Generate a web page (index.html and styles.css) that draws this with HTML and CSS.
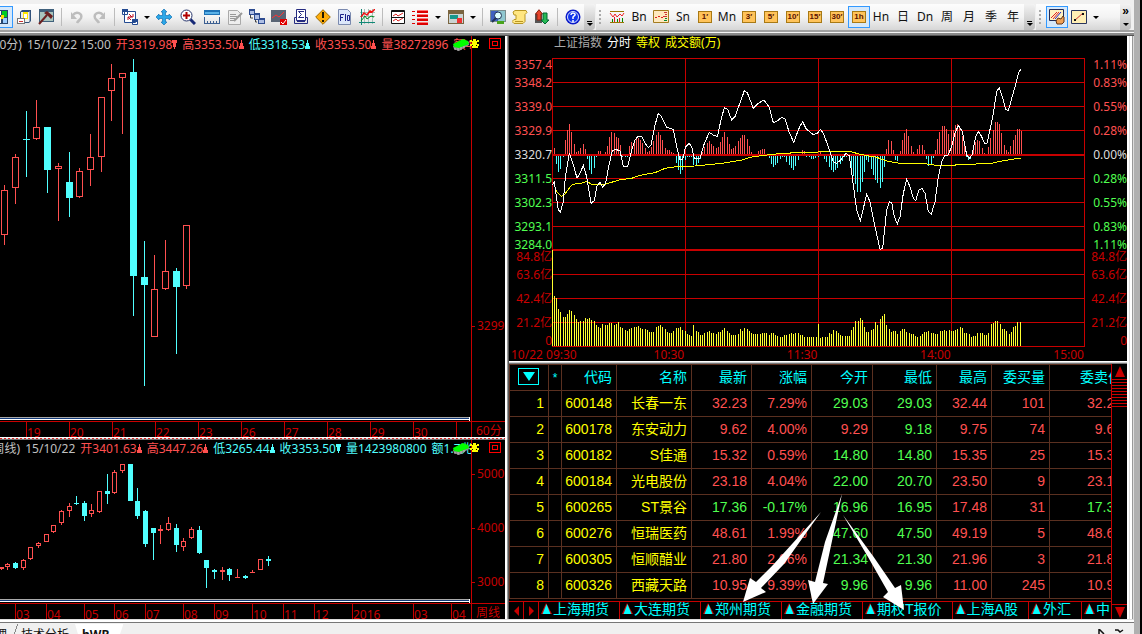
FILE: index.html
```html
<!DOCTYPE html>
<html lang="zh-CN">
<head>
<meta charset="utf-8">
<title>行情分析</title>
<link rel="stylesheet" href="styles.css">
</head>
<body>
<svg class="defs" aria-hidden="true">
  <symbol id="up" viewBox="0 0 5 9"><path d="M2 0h1v3h1v3h1v3H0V6h1V3h1z" fill="currentColor"/></symbol>
  <symbol id="down" viewBox="0 0 5 9"><path d="M0 0h5v3H4v4H3v2H2V7H1V3H0z" fill="currentColor"/></symbol>
  <symbol id="pad" viewBox="0 0 18 12"><path d="M1 7 12 1l5 2v3L7 12 2 10z" fill="#8c8c8c"/><path d="M1 5 11 0l5 2 1 3L7 9 2 8z" fill="#00ff00"/><path d="M3 9v2M6 9v3M9 8v3M12 7v2" stroke="#bbb"/></symbol>
  <symbol id="pin" viewBox="0 0 10 9"><path d="M3 0h3v2h1V1h2v2H7v2h2v2H7V6H6v1h2v2H2V7h1V6H2v1H0V5h2V3H0V1h2v1h1z" fill="#ff0"/></symbol>
  <symbol id="tri" viewBox="0 0 11 12"><path d="M5 0 0 11h11z" fill="#c80000"/><path d="M5.500 1 1.500 11h8z" fill="#0ff"/></symbol>
</svg>
<div class="app">
  <header class="toolbars">
    <div class="bar">
      <button class="tool first on" aria-label="报价"><svg viewBox="0 0 16 16"><path fill="#26456e" d="M1 1h13v14H1z"/><path fill="#fff" d="M2 2h5v4H2zM2 8h5v6H2z"/><path fill="#0c2" d="M8 2h5v6H8z"/><path fill="#fd0" d="M7 6h3v4H7z"/><path fill="#9cf" d="M9 9h4v5H9z"/></svg></button>
      <button class="tool" aria-label="副本"><svg viewBox="0 0 16 16"><path fill="#31527b" d="m4 3 2-2h9v11l-2 2H4z"/><path fill="#eee" d="M5 3h8v10H5z"/><path fill="#9ab" d="M13 3l1-1v10l-1 1z"/><path fill="#ffe800" d="M7 3h5v7H7z"/><path fill="#fff" d="M8 5h3v4H8z"/><path fill="#777" d="M1 9h8v6H1z"/><path fill="#fff" d="M2 10h6v4H2z"/><path fill="#c33" d="M3 12h4v1H3z"/></svg></button>
      <button class="tool" aria-label="工具"><svg viewBox="0 0 16 16"><path fill="#40617c" d="M1 0h15v13H1z"/><path fill="#a9c4bd" d="M2 3h13v9H2z"/><path d="m1 15 8-9" stroke="#6b2020" stroke-width="2"/><path fill="#6b2020" d="m6 4 3-2 6 5-2 3-3-3z"/></svg></button>
      <i class="sep"></i>
      <button class="tool" aria-label="撤销"><svg viewBox="0 0 16 16"><path d="M4 6c3-4 10-2 8 3-1 2-3 3-4 5" fill="none" stroke="#bdbdbd" stroke-width="2.500"/><path fill="#bdbdbd" d="M2 3v7h6z"/></svg></button>
      <button class="tool" aria-label="重做"><svg viewBox="0 0 16 16"><path d="M12 6C9 2 2 4 4 9c1 2 3 3 4 5" fill="none" stroke="#bdbdbd" stroke-width="2.500"/><path fill="#bdbdbd" d="M14 3v7H8z"/></svg></button>
      <i class="sep"></i>
      <button class="tool" aria-label="切换"><svg viewBox="0 0 16 16"><path fill="#fff" stroke="#234a91" d="M2.500 2.500h11v11h-11zM.500.500h5v5h-5zM10.500 10.500h5v5h-5z"/><path fill="#234a91" d="M0 0h6v3H0zM10 10h6v3h-6z"/><path d="m7 5 3 3M6 8l3 3M11 5v3H8M6 11V8h3" fill="none" stroke="#b12"/></svg></button>
      <button class="drop" aria-label="更多切换"></button>
      <button class="tool wide" aria-label="移动"><svg viewBox="0 0 16 16"><path fill="#2ba7e8" stroke="#1672b5" stroke-width=".7" d="m8 0 3 3H9.500v3.500H13V5l3 3-3 3V9.500H9.500V13H11l-3 3-3-3h1.500V9.500H3V11L0 8l3-3v1.500h3.500V3H5z"/></svg></button>
      <button class="tool wide" aria-label="放大"><svg viewBox="0 0 16 16"><path d="m10 10 5 5" stroke="#172a77" stroke-width="3"/><circle cx="6.500" cy="6.500" r="5.500" fill="#fff" stroke="#26346b"/><path d="M6.500 3v7M3 6.500h7" stroke="#b10000" stroke-width="2"/></svg></button>
      <button class="tool wide" aria-label="标尺"><svg viewBox="0 0 16 16"><path fill="#1d71b5" d="M0 1h16v5H0z"/><path fill="#5ab2e8" d="M1 3h14v2H1z"/><path d="M.500 8v7M3.500 12v3M6.500 12v3M9.500 12v3M12.500 12v3M15.500 8v7M0 14.500h16" stroke="#3c5f91"/></svg></button>
      <button class="tool" aria-label="笔记"><svg viewBox="0 0 16 16"><path fill="#eee" stroke="#aaa" d="M1.500 1.500h9l3 3v11h-12z"/><path d="M3 5.500h6M3 7.500h7M3 9.500h5M3 11.500h4" stroke="#999"/><path d="m7 12 8-8" stroke="#999" stroke-width="2"/></svg></button>
      <button class="tool" aria-label="层叠"><svg viewBox="0 0 16 16"><path fill="#2d4b90" d="M0 0h6v6H0zM5 4h6v7H5zM9 9h7v6H9z"/><path fill="#aebfe5" d="M1 2h4v3H1zM6 6h4v4H6zM10 11h5v3h-5z"/><path d="M1.500 6v3H4M6.500 11v2H8" stroke="#444" fill="none"/></svg></button>
      <button class="tool" aria-label="监控"><svg viewBox="0 0 16 16"><path fill="#596474" d="M0 1h15v12H0z"/><path d="m1 9 4-3 3 2 5-5" stroke="#f33" fill="none"/><path fill="#e00000" d="M9 10h7v6H9z"/><path d="m10 13 2 2 3-4" stroke="#fff" fill="none"/></svg></button>
      <button class="tool" aria-label="统计"><svg viewBox="0 0 16 16"><path fill="#fff" stroke="#252b80" d="M3.500.500h9v11h-9z"/><path d="M11 2.500H5.500l3 3-3 3H11M4 8.500H1.500v6h13v-6H12M4 12.500h8" fill="none" stroke="#252b80"/></svg></button>
      <button class="tool" aria-label="预警"><svg viewBox="0 0 16 16"><path fill="#ffad0a" stroke="#9a6a05" d="m8 .700 7.300 7.300L8 15.300.700 8z"/><path fill="#221800" d="M7 3h2v6H7zM7 11h2v2H7z"/></svg></button>
      <button class="tool" aria-label="资料F10"><svg viewBox="0 0 16 16"><path fill="#dce7fa" stroke="#7b8aaf" d="M1.500.500h9l3 3v12h-12z"/><path d="M3.500 12V5.500H7M3 8.500h3M8.500 5v7M10.500 6.500h2v5h-2z" fill="none" stroke="#1c238a"/></svg></button>
      <button class="tool" aria-label="走势"><svg viewBox="0 0 16 16"><path d="M5.500 0v15M9.500 0v15M13.500 0v15M1 3.500h15M1 7.500h15" stroke="#a4c2b7"/><path d="M2.500 0v16M0 13.500h16" stroke="#187"/><path d="m2 8 3-4 3 2 3-4 2 1 3-3" stroke="#e11" fill="none" stroke-width="1.500"/><path d="m2 12 4-5 2 3 4-3 3 1" stroke="#082" fill="none"/></svg></button>
      <i class="sep"></i>
      <button class="tool" aria-label="双图"><svg viewBox="0 0 16 16"><path fill="#fff" stroke="#111" d="M1.500 1.500h13v13h-13zM1 2.500h14M1 8.500h14"/><path d="m3 7 3-2 2 2 5-3M3 12l3-2 2 2 5-3" fill="none" stroke="#d22"/></svg></button>
      <button class="tool" aria-label="列表"><svg viewBox="0 0 16 16"><path fill="#d00" d="M5 1h11v3H5zM5 5h11v3H5zM5 9h11v3H5zM5 13h11v3H5zM0 2h3v1H0zM0 6h3v1H0zM0 10h3v1H0zM0 14h3v1H0z"/><path fill="#f77" d="M5 1h11v1H5zM5 5h11v1H5zM5 9h11v1H5zM5 13h11v1H5z"/></svg></button>
      <button class="drop gap" aria-label="更多列表"></button>
      <button class="tool" aria-label="版面"><svg viewBox="0 0 16 16"><path fill="#7a6540" d="M0 1h16v14H0z"/><path fill="#cbd4d2" d="M1 5h14v9H1z"/><path fill="#17988d" d="M2 6h8v4H2z"/><path fill="#e33" d="M9 9h5v5H9z"/></svg></button>
      <button class="drop" aria-label="更多版面"></button>
      <i class="sep"></i>
      <button class="tool" aria-label="屏幕"><svg viewBox="0 0 16 16"><path fill="#7a8d8e" d="M0 1h16v12H0z"/><path fill="#3f62c0" d="M1 2h7v10H1z"/><path fill="#8fc7d0" d="M8 2h7v10H8z"/><circle cx="8" cy="6.500" r="3.500" fill="#dff" stroke="#235"/><path d="m6 9-4 4" stroke="#235" stroke-width="2"/><path fill="#48a31b" d="M7 12h7v3H7z"/></svg></button>
      <button class="tool" aria-label="公式"><svg viewBox="0 0 16 16"><path fill="#ffe681" stroke="#b89623" d="M3 1.500h11l1 2-2 2v7l-2 2H2l-2-2 2-2h2V6H2L1 3z"/><path d="M3 12.500h8" stroke="#b89623"/></svg></button>
      <button class="tool" aria-label="买卖"><svg viewBox="0 0 16 16"><path fill="#555" d="M1 5h7v9H1z"/><path fill="#e6442c" stroke="#821" d="M5 .700 8.500 5H7v6H3V5H1.500z"/><path fill="#27b954" stroke="#063" d="M9 4h4v7h2l-4 4-4-4h2z"/></svg></button>
      <i class="sep"></i>
      <button class="tool" aria-label="帮助"><svg viewBox="0 0 16 16"><circle cx="8" cy="8" r="7.500" fill="#0918c9"/><circle cx="8" cy="8" r="5.500" fill="#1236ec" stroke="#d9e5ff"/><path d="M6 6c0-3 5-2 4 0L8 8v2M8 11v2" fill="none" stroke="#fff" stroke-width="1.500"/></svg></button>
      <button class="more" aria-label="更多"></button>
    </div>
    <div class="bar">
      <i class="grip"></i>
      <button class="tool" aria-label="分时"><svg viewBox="0 0 16 16"><path d="M1 2.500h14M1 13.500h14" stroke="#9a7500"/><path d="m1 4 3 4 2-3 2 3 3-3 2 2 2-3" stroke="#e22" fill="none"/><path d="M3.500 10v3M8.500 10v3M13.500 9v4" stroke="#080"/><path d="M5.500 8v5M10.500 9v4" stroke="#d22"/></svg></button>
      <button class="tool">Bn</button>
      <button class="tool" aria-label="明细"><svg viewBox="0 0 16 16"><path fill="#ffe9bf" stroke="#a47c20" d="M.500 1.500h15v12H.500z"/><path d="M2 8.500h2M5 7.500h2M8 8.500h2" stroke="#d22"/><path d="M11 3.500h3M12 5.500h2M10 7.500h4" stroke="#c33"/><path d="M12 9.500h2M11 11.500h3" stroke="#083"/></svg></button>
      <button class="tool">Sn</button>
      <button class="tool"><span class="minute">1′</span></button>
      <button class="tool">Mn</button>
      <button class="tool"><span class="minute">3′</span></button>
      <button class="tool"><span class="minute">5′</span></button>
      <button class="tool"><span class="minute">10′</span></button>
      <button class="tool"><span class="minute">15′</span></button>
      <button class="tool"><span class="minute">30′</span></button>
      <button class="tool on"><span class="minute">1h</span></button>
      <button class="tool">Hn</button>
      <button class="tool">日</button>
      <button class="tool">Dn</button>
      <button class="tool">周</button>
      <button class="tool">月</button>
      <button class="tool">季</button>
      <button class="tool">年</button>
      <button class="more" aria-label="更多周期"></button>
    </div>
    <div class="bar last">
      <i class="grip"></i>
      <button class="tool on" aria-label="画线"><svg viewBox="0 0 16 16"><path fill="#fff1c0" stroke="#222b55" d="M.500.500h14v11H.500z"/><path d="m2 9 6-6M4 10l6-7" stroke="#d22"/><path d="m6 10 6-7" stroke="#22c"/><path fill="#f1a154" stroke="#643518" d="m7 12 2-3 3 1 2-3 1 1v5l-2 2H8z"/></svg></button>
      <button class="tool" aria-label="线段"><svg viewBox="0 0 16 16"><path fill="#ffefb5" stroke="#29355d" d="M.500 1.500h15v13H.500z"/><path d="m3 12 9-8" stroke="#c33"/><path fill="#111" d="M3 10h2v2H3zM11 4h2v2h-2z"/></svg></button>
      <button class="drop" aria-label="更多画线"></button>
      <button class="more double" aria-label="更多工具"></button>
    </div>
  </header>

  <main class="workspace">
    <div class="left">
      <section class="panel">
        <div class="info">
          <p class="quote"><span class="period">(60分)</span><span>15/10/22 15:00</span><b class="r">开3319.98<svg><use href="#down"/></svg></b><b class="r">高3353.50<svg><use href="#up"/></svg></b><b class="c">低3318.53<svg><use href="#up"/></svg></b><b class="r">收3353.50<svg><use href="#up"/></svg></b><b class="r">量38272896</b><b class="r">额4</b></p>
          <svg class="pad"><use href="#pad"/></svg><svg class="pin"><use href="#pin"/></svg><button class="max" aria-label="最大化"></button>
        </div>
        <svg class="plot" id="hour" viewBox="0 52 471 365" preserveAspectRatio="none" shape-rendering="crispEdges"></svg>
        <div class="yaxis hour-axis"><span>3299</span></div>
        <div class="slide"></div>
        <div class="dates hour-dates"><i></i><span>19</span><span>20</span><span>21</span><span>22</span><span>23</span><span>26</span><span>27</span><span>28</span><span>29</span><span>30</span><span></span></div>
        <div class="unit">60分</div>
      </section>
      <div class="hsplit dotted"></div>
      <section class="panel">
        <div class="info">
          <p class="quote"><span class="period">(周线)</span><span>15/10/22</span><b class="r">开3401.63<svg><use href="#up"/></svg></b><b class="r">高3447.26<svg><use href="#up"/></svg></b><b class="c">低3265.44<svg><use href="#up"/></svg></b><b class="c">收3353.50<svg><use href="#down"/></svg></b><b class="c">量1423980800</b><b class="c">额1.7兆</b></p>
          <svg class="pad"><use href="#pad"/></svg><svg class="pin"><use href="#pin"/></svg><button class="max" aria-label="最大化"></button>
        </div>
        <svg class="plot" id="week" viewBox="0 456 471 143" preserveAspectRatio="none" shape-rendering="crispEdges"></svg>
        <div class="yaxis week-axis"><span>5000</span><span>4000</span><span>3000</span></div>
        <div class="slide"></div>
        <div class="dates week-dates"><i></i><span>03</span><span>04</span><span>05</span><span>06</span><span>07</span><span>08</span><span>09</span><span>10</span><span>11</span><span>12</span><span>2016</span><span>03</span><span>04</span></div>
        <div class="unit">周线</div>
      </section>
    </div>
    <div class="vsplit"></div>
    <div class="right">
      <section class="intraday">
        <p class="title"><span class="grey">上证指数</span><span class="white">分时</span><span>等权</span><span>成交额(万)</span></p>
        <div class="scale prices"><span class="r">3357.4</span><span class="r">3348.2</span><span class="r">3339.0</span><span class="r">3329.9</span><span class="w">3320.7</span><span class="g">3311.5</span><span class="g">3302.3</span><span class="g">3293.1</span><span class="g">3284.0</span><span>84.8亿</span><span>63.6亿</span><span>42.4亿</span><span>21.2亿</span><span>0</span></div>
        <svg class="day" id="day" viewBox="141 24 1599 867" preserveAspectRatio="none" shape-rendering="crispEdges"></svg>
        <div class="scale"><span class="r">1.11%</span><span class="r">0.83%</span><span class="r">0.55%</span><span class="r">0.28%</span><span class="w">0.00%</span><span class="g">0.28%</span><span class="g">0.55%</span><span class="g">0.83%</span><span class="g">1.11%</span><span>84.8亿</span><span>63.6亿</span><span>42.4亿</span><span>21.2亿</span><span>0</span></div>
        <div class="times"><span class="open">10/22 09:30</span><span>10:30</span><span>11:30</span><span>14:00</span><span>15:00</span></div>
      </section>
      <div class="hsplit"></div>
      <section class="market">
        <div class="table-wrap">
          <table>
            <colgroup><col class="w39"><col class="w13"><col class="w55"><col class="w75"><col class="w60"><col class="w60"><col class="w61"><col class="w64"><col class="w55"><col class="w58"><col></colgroup>
            <thead><tr><th><button class="filter" aria-label="筛选"></button></th><th class="star">*</th><th>代码</th><th>名称</th><th>最新</th><th>涨幅</th><th>今开</th><th>最低</th><th>最高</th><th>委买量</th><th>委卖价</th></tr></thead>
            <tbody>
              <tr><td>1</td><td></td><td>600148</td><td>长春一东</td><td class="r">32.23</td><td class="r">7.29%</td><td class="g">29.03</td><td class="g">29.03</td><td class="r">32.44</td><td class="r">101</td><td class="r">32.24</td></tr>
              <tr><td>2</td><td></td><td>600178</td><td>东安动力</td><td class="r">9.62</td><td class="r">4.00%</td><td class="r">9.29</td><td class="g">9.18</td><td class="r">9.75</td><td class="r">74</td><td class="r">9.62</td></tr>
              <tr><td>3</td><td></td><td>600182</td><td>S佳通</td><td class="r">15.32</td><td class="r">0.59%</td><td class="g">14.80</td><td class="g">14.80</td><td class="r">15.35</td><td class="r">25</td><td class="r">15.33</td></tr>
              <tr><td>4</td><td></td><td>600184</td><td>光电股份</td><td class="r">23.18</td><td class="r">4.04%</td><td class="g">22.00</td><td class="g">20.70</td><td class="r">23.50</td><td class="r">9</td><td class="r">23.19</td></tr>
              <tr><td>5</td><td></td><td>600265</td><td>ST景谷</td><td class="g">17.36</td><td class="g">-0.17%</td><td class="g">16.96</td><td class="g">16.95</td><td class="r">17.48</td><td class="r">31</td><td class="g">17.36</td></tr>
              <tr><td>6</td><td></td><td>600276</td><td>恒瑞医药</td><td class="r">48.61</td><td class="r">1.99%</td><td class="g">47.60</td><td class="g">47.50</td><td class="r">49.19</td><td class="r">5</td><td class="r">48.62</td></tr>
              <tr><td>7</td><td></td><td>600305</td><td>恒顺醋业</td><td class="r">21.80</td><td class="r">2.06%</td><td class="g">21.34</td><td class="g">21.30</td><td class="r">21.96</td><td class="r">3</td><td class="r">21.81</td></tr>
              <tr><td>8</td><td></td><td>600326</td><td>西藏天路</td><td class="r">10.95</td><td class="r">9.39%</td><td class="g">9.96</td><td class="g">9.96</td><td class="r">11.00</td><td class="r">245</td><td class="r">10.96</td></tr>
            </tbody>
          </table>
        </div>
        <nav class="sheets">
          <button class="step prev" aria-label="上一页"></button><button class="step next" aria-label="下一页"></button>
          <button class="sheet"><svg><use href="#tri"/></svg>上海期货</button><button class="sheet"><svg><use href="#tri"/></svg>大连期货</button><button class="sheet"><svg><use href="#tri"/></svg>郑州期货</button><button class="sheet"><svg><use href="#tri"/></svg>金融期货</button><button class="sheet"><svg><use href="#tri"/></svg>期权T报价</button><button class="sheet"><svg><use href="#tri"/></svg>上海A股</button><button class="sheet"><svg><use href="#tri"/></svg>外汇</button><button class="sheet"><svg><use href="#tri"/></svg>中</button>
        </nav>
        <div class="scroll"><button class="s-up" aria-label="向上"></button><i class="thumb"></i><button class="s-down" aria-label="向下"></button></div>
        <svg class="arrows" viewBox="509 364 618 255" aria-hidden="true"><g fill="#fff"><path d="M821 512 773 565 756 582 750 578 743 602 766 592 761 588 784 564z"/><path d="M842 494 825 542 815 582 808 580 813 604 828 584 823 583 832 541z"/><path d="M843 515 868 557 888 592 883 597 904 610 901 585 895 588 873 556z"/></g></svg>
      </section>
    </div>
    <div class="frame"></div>
  </main>
  <footer class="tabs"><button class="tab manage">管理</button><button class="tab analysis">技术分析</button><button class="tab current">hWB</button><span class="marks"><svg viewBox="0 0 26 6"><path d="M1 0v6M1 0l5 5M17 1h3l2 2 3-2" fill="none" stroke="#111" stroke-width="1.500"/></svg></span></footer>
</div>
<div class="edge"></div>
<script src="charts.js"></script>
</body>
</html>
```

FILE: styles.css
```css
* { box-sizing: border-box; }
body { margin: 0; min-height: 100vh; display: grid; grid-template-columns: minmax(0, 1fr) 8px; background: #f0f0f0; font: 12px/16px "Noto Sans", "Noto Sans CJK SC", sans-serif; overflow: hidden; }
button { margin: 0; padding: 0; border: 0; background: none; color: inherit; font: inherit; }
p { margin: 0; }
.defs { position: absolute; width: 0; height: 0; }
.app { display: flex; flex-direction: column; height: 100vh; min-width: 0; }
.edge { border-left: 6px solid #b0b0b0; background: #000; }

/* toolbars */
.toolbars { flex: none; display: flex; gap: 1px; height: 36px; padding: 4px 3px 6px 0; background: linear-gradient(#f0f0f0 30px, #a0a0a0 30px, #a0a0a0 32px, #f4f4f4 32px, #f4f4f4 33px, #8a8a8a 33px, #8a8a8a 35px, #555 35px); }
.bar { display: flex; align-items: center; height: 26px; background: linear-gradient(#fdfdfd, #f3f3f3 50%, #d6d6d6); border-radius: 0 4px 4px 0; }
.bar.last { flex: 1; }
.tool { flex: none; width: 22px; height: 22px; display: flex; align-items: center; justify-content: center; color: #111; font-size: 12px; }
.tool svg { width: 16px; height: 16px; }
.tool.wide { width: 24px; }
.tool.on { border: 1px solid #3399ff; background: #d5e8fa; }
.tool.first { margin-left: -9px; }
.sep { flex: none; width: 1px; height: 18px; margin: 0 4px; background: #bcbcbc; }
.drop { flex: none; width: 11px; height: 22px; display: flex; align-items: center; justify-content: center; }
.drop.gap { width: 14px; }
.drop::before { content: ""; border: 3px solid transparent; border-top-color: #000; border-bottom: 0; }
.more { flex: none; width: 11px; height: 26px; border-radius: 0 4px 4px 0; background: linear-gradient(#f2f2f2, #bdbdbd); display: flex; flex-direction: column; align-items: center; justify-content: flex-end; gap: 1px; padding-bottom: 4px; }
.more::before { content: ""; width: 5px; height: 1px; background: #000; }
.more::after { content: ""; border: 3px solid transparent; border-top-color: #000; border-bottom: 0; }
.more.double { margin-left: auto; }
.more.double::before { content: "»"; width: auto; height: 12px; background: none; font: bold 12px/10px "Liberation Sans", sans-serif; margin-bottom: 4px; }
.grip { flex: none; width: 2px; height: 15px; margin: 0 5px 0 3px; background: repeating-linear-gradient(#aaa 0 2px, transparent 2px 4px); }
.minute { width: 14px; height: 12px; border: 1px solid #a87914; background: #ffc35a; color: #5a1200; font: bold 8px/10px "Liberation Sans", sans-serif; display: flex; justify-content: center; white-space: nowrap; }

/* workspace */
.workspace { flex: 1; min-height: 0; display: grid; grid-template-columns: 505fr 4px 618fr 7px; grid-template-rows: minmax(0, 1fr); background: #000; }
.left { min-width: 0; display: grid; grid-template-rows: minmax(0, 401fr) 3px minmax(0, 179fr); }
.right { min-width: 0; display: flex; flex-direction: column; }
.vsplit { background: linear-gradient(90deg, #fff 2px, #999 2px, #999 3px, #555 3px); }
.hsplit { height: 3px; flex: none; background: linear-gradient(#fff 1px, #ccc 1px, #ccc 2px, #777 2px); }
.dotted { background: linear-gradient(#fff 1px, transparent 1px, transparent 2px, #777 2px), repeating-linear-gradient(90deg, #d22 0 2px, #ddd 2px 4px); }
.frame { background: linear-gradient(90deg, #fff 2px, #ddd 2px, #ddd 3px, #fff 3px, #fff 5px, #999 5px, #999 6px, #ddd 6px); }
.r { color: #ff5050; }
.g { color: #50ff50; }
.c { color: #50ffff; }
.w { color: #dcdcdc; }

.panel { min-width: 0; min-height: 0; display: grid; grid-template-columns: minmax(0, 471fr) 34px; grid-template-rows: 16px minmax(0, 1fr) 4px 16px; overflow: hidden; color: #c80000; }
.info { grid-area: 1 / 1 / 2 / 3; display: flex; position: relative; z-index: 1; }
.quote { flex: 1; min-width: 0; display: flex; gap: 5px; overflow: hidden; white-space: nowrap; color: #c0c0c0; line-height: 18px; }
.quote b { font-weight: normal; }
.quote svg { width: 5px; height: 9px; }
.period { margin-left: -11px; }
.pad { width: 18px; height: 12px; margin: 3px 0 0 -19px; }
.pin { width: 10px; height: 9px; margin: 3px 9px 0 0; }
.max { width: 12px; height: 11px; margin: 2px 4px 0 0; border: 1px solid #f00; padding: 2px; display: flex; }
.max::before { content: ""; flex: 1; align-self: stretch; border: 1px solid #f00; }
.plot { grid-area: 2 / 1; width: 100%; height: 100%; }
.yaxis { grid-area: 1 / 2 / 4 / 3; border-left: 1px solid #c80000; display: flex; flex-direction: column; }
.yaxis span { display: flex; align-items: center; gap: 2px; }
.yaxis span::before { content: ""; width: 3px; height: 1px; background: #c80000; }
.hour-axis { justify-content: flex-end; padding-bottom: 87px; }
.week-axis { padding: 7px 0 0; }
.week-axis span { flex: 0 0 54px; }
.slide { grid-area: 3 / 1; margin-right: 1px; border-right: 1px solid #fff; background: linear-gradient(#aaa 1px, #123a7a 1px, #123a7a 2px, #fff 2px, #fff 3px, transparent 3px); }
.dates { grid-area: 4 / 1; display: grid; border-top: 1px solid #c80000; line-height: 22px; overflow: hidden; }
.dates span { border-left: 1px solid #c80000; }
.hour-dates { grid-template-columns: 26fr repeat(10, 43fr) 15fr; }
.week-dates { grid-template-columns: 15fr 31fr 38fr 30fr 31fr 38fr 31fr 38fr 31fr 31fr 38fr 61fr 38fr 20fr; }
.unit { grid-area: 4 / 2; border-left: 1px solid #c80000; border-top: 1px solid #c80000; padding-left: 4px; line-height: 18px; overflow: hidden; }

/* intraday chart */
.intraday { flex: 1; min-height: 0; display: grid; grid-template-columns: 43px minmax(0, 1fr) 42px; grid-template-rows: 22px minmax(0, 1fr) 14px; color: #c80000; }
.title { grid-column: 1 / 4; display: flex; gap: 5px; padding-left: 45px; line-height: 14px; color: #ff0; }
.title .grey { color: #aaa; }
.title .white { color: #fff; }
.day { width: 100%; height: 100%; min-height: 0; }
.scale { min-height: 0; display: flex; flex-direction: column; align-items: flex-end; padding-top: 1px; white-space: nowrap; }
.scale span { flex: 2 1 0; min-height: 0; display: flex; align-items: center; line-height: 12px; }
.scale span:nth-child(1), .scale span:nth-child(9), .scale span:nth-child(10), .scale span:nth-child(14) { flex-grow: 1; }
.times { grid-column: 1 / 4; display: grid; grid-template-columns: 43px repeat(4, 1fr) 42px; grid-template-rows: 14px; text-align: right; line-height: 16px; overflow: hidden; }
.times span { grid-row: 1; padding-right: 1px; }
.times .open { grid-area: 1 / 1 / 2 / 3; text-align: left; padding-left: 2px; }
.times span:nth-child(2) { grid-column: 2; }

/* quote table */
.market { position: relative; flex: none; display: grid; grid-template-columns: minmax(0, 1fr) 16px; grid-template-rows: auto 18px; row-gap: 2px; font-family: "Liberation Sans", "Noto Sans CJK SC", sans-serif; font-size: 14px; }
.table-wrap { overflow: hidden; }
table { width: 618px; min-width: 100%; table-layout: fixed; border-collapse: collapse; color: #ff0; }
.w39 { width: 39px; } .w13 { width: 13px; } .w55 { width: 55px; } .w75 { width: 75px; }
.w60 { width: 60px; } .w61 { width: 61px; } .w64 { width: 64px; } .w58 { width: 58px; }
th, td { height: 26px; padding: 0 4px 2px 0; border: 1px solid #5a3020; text-align: right; font-weight: normal; line-height: 20px; white-space: nowrap; }
th { color: #0ff; }
td.r { color: #ff5050; }
td.g { color: #50ff50; }
th.star { padding: 0; text-align: center; font-size: 12px; }
.filter { display: flex; align-items: center; justify-content: center; width: 21px; height: 17px; margin: 0 5px 0 auto; border: 1px solid #0ff; }
.filter::before { content: ""; border: 6px solid transparent; border-top: 9px solid #0ff; border-bottom: 0; }
.sheets { display: flex; overflow: hidden; border-top: 1px solid #c80000; color: #0ff; }
.step { flex: none; width: 15px; border-right: 1px solid #c80000; display: flex; align-items: center; justify-content: center; }
.step::before { content: ""; border: 5px solid transparent; }
.prev::before { border-right-color: #c80000; border-left: 0; }
.next::before { border-left-color: #c80000; border-right: 0; }
.sheet { flex: none; display: flex; align-items: center; padding: 0 10px 3px 2px; border-right: 1px solid #c80000; line-height: 14px; white-space: nowrap; }
.sheet svg { width: 11px; height: 12px; margin-right: 1px; }
.scroll { grid-area: 1 / 2 / 3 / 3; border-left: 1px solid #c80000; display: flex; flex-direction: column; }
.s-up, .s-down { height: 15px; display: flex; align-items: center; justify-content: center; }
.s-up::before { content: ""; border: 5px solid transparent; border-bottom: 11px solid #c80000; border-top: 0; }
.s-down { margin-top: auto; border-top: 1px solid #c80000; }
.s-down::before { content: ""; border: 5px solid transparent; border-top: 11px solid #c80000; border-bottom: 0; }
.thumb { height: 28px; background: repeating-linear-gradient(#c80000 0 1px, transparent 1px 3px); }
.arrows { position: absolute; left: 0; top: 0; width: 618px; height: 100%; pointer-events: none; }

/* page tabs */
.tabs { flex: none; height: 15px; display: flex; overflow: hidden; border-top: 1px solid #ddd; box-shadow: inset 0 2px #fff, inset 0 3px #777; padding-top: 4px; }
.tab { flex: none; height: 20px; color: #111; }
.manage { margin-left: -17px; padding: 2px 6px 0 0; }
.analysis { padding: 2px 6px 0 8px; background: linear-gradient(110deg, transparent 4px, #888 4px, #888 5px, transparent 5px); }
.current { padding: 2px 14px 0 7px; background: #fff; clip-path: polygon(0 0, 100% 0, 86% 100%, 12% 100%); font-weight: bold; }
.marks { margin-left: auto; padding: 5px 10px 0 0; }
.marks svg { display: block; width: 26px; height: 6px; }
```

FILE: charts.js
```js
const NS = "http://www.w3.org/2000/svg";
const RED = "#ff5050", CYAN = "#50ffff", GRID = "#c80000";

function add(svg, tag, attrs) {
  const el = document.createElementNS(NS, tag);
  for (const k in attrs) el.setAttribute(k, attrs[k]);
  svg.appendChild(el);
}
function rect(svg, x, y, width, height, fill) {
  add(svg, "rect", { x, y, width, height, fill });
}

/* Candle rows: centre, high, body top, body bottom, low, 1 = rising */
function candles(id, half, rows) {
  const svg = document.getElementById(id);
  for (const [x, h, t, b, l, up] of rows) {
    const c = up ? RED : CYAN, w = half * 2 + 1;
    if (t > h) rect(svg, x, h, 1, t - h, c);
    if (l > b) rect(svg, x, b, 1, l - b, c);
    if (up && b - t > 2) {
      rect(svg, x - half, t, w, 1, c);
      rect(svg, x - half, b - 1, w, 1, c);
      rect(svg, x - half, t, 1, b - t, c);
      rect(svg, x + half, t, 1, b - t, c);
    } else rect(svg, x - half, t, w, b - t, c);
  }
}

candles("hour", 3, [
  [4,185,190,235,245,1],[15,154,157,188,204,1],[26,111,139,140,177,0],[36,100,127,139,140,1],
  [47,127,127,170,193,0],[58,163,166,169,221,1],[69,152,182,198,217,0],[79,168,171,197,198,1],
  [90,134,157,170,186,1],[101,97,97,157,172,1],[111,64,78,91,121,1],[122,73,73,78,134,1],
  [133,59,72,276,316,0],[144,241,277,285,386,0],[154,255,289,337,337,1],[165,240,271,289,290,1],
  [176,268,271,287,354,0],[186,225,225,286,289,1]
]);

candles("week", 2, [
  [1,567,567,569,570,1],[7,563,564,567,570,1],[15,562,563,568,569,0],[23,559,560,568,570,1],
  [30,547,547,559,560,1],[38,542,543,546,548,1],[46,534,534,542,542,1],[53,525,525,532,533,1],
  [61,510,511,523,525,1],[69,503,506,511,517,1],[76,496,503,504,505,0],[84,501,503,516,521,0],
  [91,504,510,514,517,1],[99,491,491,512,513,1],[107,474,491,494,504,0],[114,470,472,493,494,1],
  [122,464,464,471,473,1],[130,464,464,501,501,0],[137,488,501,516,519,0],[145,510,511,544,547,0],
  [153,528,528,533,560,0],[160,525,529,531,544,1],[168,517,523,530,531,1],[176,524,528,545,552,0],
  [183,538,541,547,551,1],[191,527,529,538,539,1],[199,526,530,553,554,0],[206,560,560,568,588,0],
  [214,569,570,572,579,0],[222,567,570,572,580,1],[229,568,569,575,581,0],[237,569,577,578,578,1],
  [245,575,576,578,579,0],[252,570,572,573,573,1],[260,559,559,570,570,1],[268,556,559,561,566,0]
]);

/* Intraday chart: three units per pixel, 0.00% at y = 314 */
const day = document.getElementById("day");
for (const y of [24, 96, 168, 240, 384, 456, 528, 672, 744, 816, 888]) rect(day, 141, y, 1599, 3, GRID);
for (const x of [141, 540, 939, 1338, 1737]) rect(day, x, 24, 3, 867, GRID);
rect(day, 141, 597, 1599, 6, GRID);

const strength = [
  148,294,154,342,160,366,166,357,175,320,181,270,187,240,193,222,199,246,208,282,214,308,220,303,226,294,235,282,241,297,
  247,327,253,360,259,372,268,354,274,320,280,303,286,303,300,306,306,288,313,261,319,246,328,249,334,261,340,264,346,285,
  352,318,360,318,366,318,373,288,379,276,388,270,394,264,400,264,406,270,412,279,421,294,427,306,433,303,439,291,445,273,
  454,255,460,246,466,255,473,270,481,294,487,300,493,300,499,306,505,309,514,339,520,360,526,372,532,360,541,330,547,318,
  553,318,559,321,565,345,574,348,580,339,586,327,592,306,598,291,606,279,613,273,620,282,626,288,634,294,640,291,646,276,
  652,261,658,246,666,261,673,282,679,297,686,294,692,288,699,273,706,264,712,255,718,255,726,267,732,288,739,306,760,303,
  766,300,772,297,778,297,792,324,799,342,805,351,811,345,818,339,825,327,832,321,838,321,845,336,852,345,858,354,865,360,
  872,348,879,330,893,300,899,304,905,319,913,321,919,327,925,327,931,324,940,321,946,306,958,327,964,336,973,351,979,360,
  985,366,991,360,997,354,1006,342,1012,333,1018,321,1024,320,1039,357,1045,378,1051,402,1057,426,1066,426,1072,396,1078,366,
  1084,330,1090,336,1099,357,1105,375,1111,390,1117,399,1126,414,1132,396,1138,351,1144,297,1150,270,1159,273,1165,300,
  1171,330,1177,334,1186,303,1192,270,1198,249,1204,237,1210,258,1219,288,1225,306,1237,297,1243,285,1252,285,1258,300,
  1264,327,1270,348,1279,345,1285,324,1291,300,1297,267,1303,246,1312,228,1318,228,1324,237,1330,252,1339,240,1345,240,
  1351,225,1357,222,1363,228,1372,258,1378,288,1384,321,1390,330,1396,327,1405,297,1411,276,1417,270,1423,273,1432,294,
  1438,309,1450,291,1456,264,1465,240,1471,216,1477,216,1483,222,1489,249,1498,285,1504,300,1510,306,1516,288,1525,270,
  1531,255,1537,237,1543,237,1549,243
];
const snap = v => Math.floor(v / 3) * 3;
for (let i = 0; i < strength.length; i += 2) {
  const x = snap(strength[i]), y = snap(strength[i + 1]);
  if (y < 314) rect(day, x, y, 3, 312 - y, RED);
  else rect(day, x, 318, 3, Math.max(3, y - 318), CYAN);
}
rect(day, 141, 312, 1599, 6, GRID);

const turnover = [
  142,600,148,738,154,744,160,777,166,786,175,801,181,801,187,792,193,780,199,783,208,795,214,807,220,816,226,813,235,813,
  241,804,247,807,253,804,259,810,268,813,274,825,280,831,286,834,292,822,300,825,306,825,313,819,319,819,328,825,334,822,
  340,816,346,831,352,834,360,840,366,843,373,837,379,834,388,831,394,831,400,828,406,834,412,837,420,837,427,840,433,846,
  439,846,445,846,454,831,460,828,466,825,473,831,481,837,487,846,493,849,499,849,505,843,514,834,520,834,526,831,532,840,
  541,843,547,852,553,855,559,858,565,825,574,843,580,846,586,855,592,855,598,849,606,846,613,843,620,849,626,849,634,852,
  640,846,646,846,652,840,658,834,666,843,673,849,679,855,686,855,692,855,699,852,706,837,712,843,718,834,726,837,732,843,
  739,849,745,852,752,852,758,852,765,852,772,849,778,849,785,849,792,855,799,849,805,849,811,855,818,858,825,861,832,861,
  838,855,845,855,852,852,858,849,865,852,872,849,879,849,886,855,893,855,899,861,906,861,912,861,919,861,926,861,933,861,
  940,822,946,864,953,861,960,861,966,861,973,849,980,852,986,840,993,843,999,849,1006,855,1013,858,1020,858,1026,858,
  1033,858,1039,840,1046,831,1052,813,1059,813,1066,804,1073,810,1079,831,1085,846,1091,846,1099,840,1105,837,1112,816,
  1118,825,1126,807,1132,798,1138,792,1144,825,1152,837,1159,846,1165,843,1172,843,1178,852,1185,843,1192,837,1198,837,
  1205,846,1212,849,1218,852,1225,852,1232,858,1238,861,1245,858,1251,852,1258,846,1265,846,1271,843,1278,849,1285,849,
  1291,852,1298,852,1305,843,1312,843,1318,840,1325,843,1332,840,1338,843,1345,843,1351,840,1358,837,1365,831,1372,834,
  1379,849,1385,849,1392,852,1398,861,1405,858,1412,858,1418,849,1425,849,1432,849,1438,855,1445,855,1451,849,1458,822,
  1465,819,1471,813,1478,813,1485,822,1491,837,1498,837,1505,843,1512,852,1518,846,1525,831,1532,828,1538,816,1545,816
];
for (let i = 0; i < turnover.length; i += 2) {
  const y = snap(turnover[i + 1]);
  rect(day, snap(turnover[i]), y, 3, 888 - y, "#ffff30");
}

function line(points, stroke) {
  add(day, "polyline", { points, stroke, fill: "none", "stroke-width": 3 });
}
line("148,405 155,425 170,439 180,432 200,405 215,401 230,399 245,394 260,403 300,403 345,389 380,385 405,376 450,368 480,355 520,349 570,348 650,340 710,330 740,321 800,313 885,307 935,307 945,304 1035,304 1065,313 1115,322 1145,333 1185,340 1265,342 1295,346 1340,346 1375,343 1455,341 1495,332 1547,324", "#ff0");
line("142,405 148,396 160,480 166,486 175,455 181,380 193,308 205,345 216,384 226,368 235,346 245,380 258,460 268,452 275,410 285,397 293,411 302,400 312,345 322,302 330,298 345,302 355,350 368,350 380,300 390,270 400,258 410,260 420,280 430,292 438,285 450,225 460,190 468,198 485,232 505,238 515,290 525,330 533,328 542,290 552,280 560,290 568,325 585,325 598,280 613,247 625,255 637,260 648,210 658,173 668,178 680,210 690,200 710,145 718,122 727,128 745,175 760,160 777,150 792,170 805,218 818,212 830,202 840,206 852,245 866,277 880,240 885,229 893,215 903,236 925,254 937,250 947,238 957,255 975,305 985,335 995,340 1007,330 1023,310 1033,318 1043,390 1055,480 1066,513 1075,475 1085,433 1095,455 1110,530 1125,598 1133,595 1145,480 1153,455 1160,458 1168,500 1177,522 1185,500 1195,430 1205,388 1215,410 1225,445 1232,452 1242,420 1251,415 1260,430 1270,485 1279,492 1290,455 1300,380 1310,335 1320,315 1328,318 1340,290 1350,250 1360,226 1372,245 1385,315 1393,325 1401,315 1412,260 1421,244 1430,260 1440,282 1447,278 1465,190 1475,125 1483,113 1492,140 1502,178 1510,182 1530,110 1540,70 1547,58", "#fff");
```
